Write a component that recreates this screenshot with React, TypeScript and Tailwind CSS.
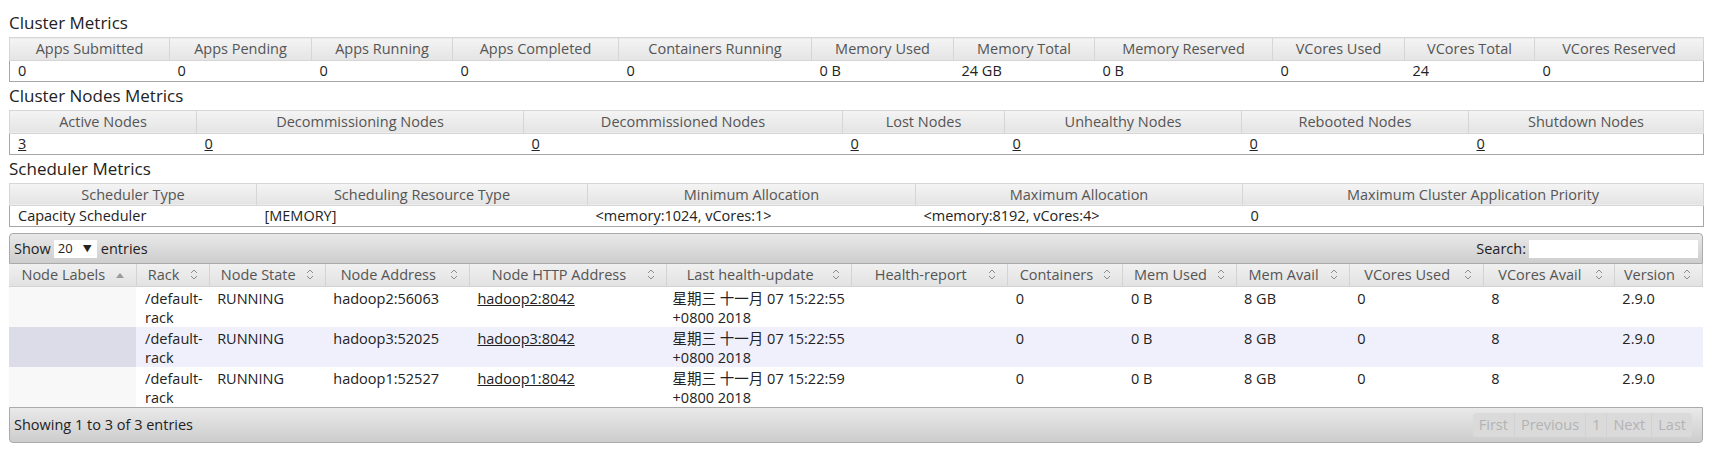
import React from 'react';

type Cell = { text: string; link?: boolean };

const clusterMetrics = {
  widths: ['w-[160px]', 'w-[142px]', 'w-[141px]', 'w-[166px]', 'w-[193px]', 'w-[142px]', 'w-[141px]', 'w-[178px]', 'w-[132px]', 'w-[130px]', 'w-[169px]'],
  headers: ['Apps Submitted', 'Apps Pending', 'Apps Running', 'Apps Completed', 'Containers Running', 'Memory Used', 'Memory Total', 'Memory Reserved', 'VCores Used', 'VCores Total', 'VCores Reserved'],
  values: ['0', '0', '0', '0', '0', '0 B', '24 GB', '0 B', '0', '24', '0'].map((t) => ({ text: t })),
};

const nodeMetrics = {
  widths: ['w-[187px]', 'w-[327px]', 'w-[319px]', 'w-[162px]', 'w-[237px]', 'w-[227px]', 'w-[235px]'],
  headers: ['Active Nodes', 'Decommissioning Nodes', 'Decommissioned Nodes', 'Lost Nodes', 'Unhealthy Nodes', 'Rebooted Nodes', 'Shutdown Nodes'],
  values: ['3', '0', '0', '0', '0', '0', '0'].map((t) => ({ text: t, link: true })),
};

const schedulerMetrics = {
  widths: ['w-[247px]', 'w-[331px]', 'w-[328px]', 'w-[327px]', 'w-[461px]'],
  headers: ['Scheduler Type', 'Scheduling Resource Type', 'Minimum Allocation', 'Maximum Allocation', 'Maximum Cluster Application Priority'],
  values: ['Capacity Scheduler', '[MEMORY]', '<memory:1024, vCores:1>', '<memory:8192, vCores:4>', '0'].map((t) => ({ text: t })),
};

const nodeColumns = [
  { title: 'Node Labels', w: 'w-[127px]', sorted: true },
  { title: 'Rack', w: 'w-[73px]' },
  { title: 'Node State', w: 'w-[116px]' },
  { title: 'Node Address', w: 'w-[144px]' },
  { title: 'Node HTTP Address', w: 'w-[197px]' },
  { title: 'Last health-update', w: 'w-[185px]' },
  { title: 'Health-report', w: 'w-[156px]' },
  { title: 'Containers', w: 'w-[115px]' },
  { title: 'Mem Used', w: 'w-[113px]' },
  { title: 'Mem Avail', w: 'w-[113px]' },
  { title: 'VCores Used', w: 'w-[134px]' },
  { title: 'VCores Avail', w: 'w-[131px]' },
  { title: 'Version', w: 'w-[88px]' },
];

const nodes = [
  { addr: 'hadoop2:56063', http: 'hadoop2:8042', time: '15:22:55' },
  { addr: 'hadoop3:52025', http: 'hadoop3:8042', time: '15:22:55' },
  { addr: 'hadoop1:52527', http: 'hadoop1:8042', time: '15:22:59' },
];

function Title({ children }: { children: React.ReactNode }) {
  return <h3 className="h-[28px] text-[17px] leading-[28px] text-[#222]">{children}</h3>;
}

function MetricsTable({ widths, headers, values }: { widths: string[]; headers: string[]; values: Cell[] }) {
  return (
    <table className="table-fixed border-collapse w-[1694px]">
      <colgroup>
        {widths.map((w, i) => (
          <col key={i} className={w} />
        ))}
      </colgroup>
      <thead>
        <tr>
          {headers.map((h) => (
            <th
              key={h}
              className="h-[22px] p-0 border border-[#d6d6d6] bg-gradient-to-b from-[#f4f4f4] to-[#e4e4e4] text-center font-normal text-[#555] whitespace-nowrap"
            >
              {h}
            </th>
          ))}
        </tr>
      </thead>
      <tbody>
        <tr>
          {values.map((v, i) => (
            <td
              key={i}
              className={`h-[20px] py-0 px-[8px] leading-[20px] border-b border-[#a6a6a6] text-left text-[#222] whitespace-nowrap ${i === 0 ? 'border-l' : ''} ${i === values.length - 1 ? 'border-r' : ''}`}
            >
              {v.link ? <a className="underline">{v.text}</a> : v.text}
            </td>
          ))}
        </tr>
      </tbody>
    </table>
  );
}

function SortIcon({ sorted }: { sorted?: boolean }) {
  if (sorted) {
    return (
      <svg width="8" height="5" viewBox="0 0 8 5" className="absolute right-[12px] top-[9px]">
        <path d="M0 5 L4 0 L8 5 Z" fill="#9a9a9a" />
      </svg>
    );
  }
  return (
    <svg width="8" height="11" viewBox="0 0 8 11" className="absolute right-[11px] top-[5px]">
      <path d="M1 4 L4 1 L7 4" fill="none" stroke="#8c8c8c" strokeWidth="1" />
      <path d="M1 7 L4 10 L7 7" fill="none" stroke="#8c8c8c" strokeWidth="1" />
    </svg>
  );
}

const cell = 'align-top pt-[2px] px-[8px] leading-[19px]';

function NodesTable() {
  return (
    <div className="mt-[6px] w-[1694px]">
      <div className="h-[31px] flex items-center justify-between px-[4px] border border-[#aaa] rounded-t-[4px] bg-gradient-to-b from-[#e9e9e9] to-[#cdcdcd] text-[#222]">
        <div className="flex items-center">
          <span>Show</span>
          <div className="ml-[3px] mr-[4px] w-[43px] h-[18px] bg-white flex items-center justify-between pl-[4px] pr-[5px] text-[13px]">
            <span>20</span>
            <span className="text-[9px]">▼</span>
          </div>
          <span>entries</span>
        </div>
        <div className="flex items-center">
          <span>Search:</span>
          <div className="ml-[3px] w-[169px] h-[18px] bg-white" />
        </div>
      </div>
      <table className="table-fixed border-collapse w-[1694px]">
        <colgroup>
          {nodeColumns.map((c) => (
            <col key={c.title} className={c.w} />
          ))}
        </colgroup>
        <thead>
          <tr>
            {nodeColumns.map((c) => (
              <th
                key={c.title}
                className="relative h-[22px] p-0 pl-[4px] pr-[22px] border-r border-b border-[#d3d3d3] bg-gradient-to-b from-[#f0f0f0] to-[#e2e2e2] text-center font-normal text-[#555] whitespace-nowrap"
              >
                {c.title}
                <SortIcon sorted={c.sorted} />
              </th>
            ))}
          </tr>
        </thead>
        <tbody>
          {nodes.map((n, i) => {
            const even = i % 2 === 1;
            return (
              <tr key={n.addr} className={even ? 'bg-[#f0f0fc]' : 'bg-white'}>
                <td className={`h-[40px] p-0 ${even ? 'bg-[#dcdce8]' : 'bg-[#f8f8f8]'}`} />
                <td className="align-top pt-[2px] px-[9px] leading-[19px] whitespace-nowrap">
                  /default-
                  <br />
                  rack
                </td>
                <td className={cell}>RUNNING</td>
                <td className={cell}>{n.addr}</td>
                <td className={cell}>
                  <a className="underline">{n.http}</a>
                </td>
                <td className="align-top pt-[2px] px-[6px] leading-[19px] whitespace-nowrap">
                  星期三 十一月 07 {n.time}
                  <br />
                  +0800 2018
                </td>
                <td className={cell} />
                <td className={cell}>0</td>
                <td className={cell}>0 B</td>
                <td className={cell}>8 GB</td>
                <td className={cell}>0</td>
                <td className={cell}>8</td>
                <td className={cell}>2.9.0</td>
              </tr>
            );
          })}
        </tbody>
      </table>
      <div className="h-[36px] flex items-center justify-between pl-[4px] pr-[10px] border border-[#aaa] rounded-b-[4px] bg-gradient-to-b from-[#e9e9e9] to-[#cdcdcd] text-[#222]">
        <span>Showing 1 to 3 of 3 entries</span>
        <div className="flex h-[24px] text-[#b3b3b3] bg-[#dadada] rounded-[3px]">
          {['First', 'Previous', '1', 'Next', 'Last'].map((b, i) => (
            <span
              key={b}
              className={`flex items-center px-[6px] border-[#d2d2d2] ${i > 0 ? 'border-l' : ''}`}
            >
              {b}
            </span>
          ))}
        </div>
      </div>
    </div>
  );
}

export default function App() {
  return (
    <div className="px-[9px] pt-[9px] bg-white min-h-[449px] text-[14.5px] font-['Open_Sans','Noto_Sans_CJK_SC',sans-serif] text-[#222]">
      <Title>Cluster Metrics</Title>
      <MetricsTable {...clusterMetrics} />
      <Title>Cluster Nodes Metrics</Title>
      <MetricsTable {...nodeMetrics} />
      <Title>Scheduler Metrics</Title>
      <MetricsTable {...schedulerMetrics} />
      <NodesTable />
    </div>
  );
}
